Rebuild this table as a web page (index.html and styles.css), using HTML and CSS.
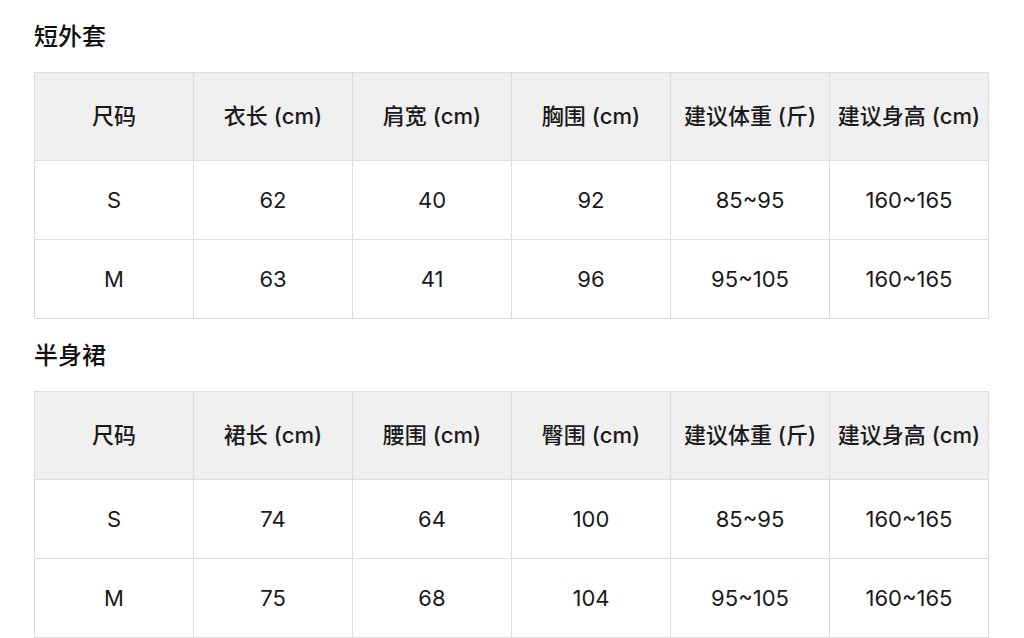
FILE: index.html
```html
<!DOCTYPE html>
<html lang="zh">
<head>
<meta charset="utf-8">
<link rel="stylesheet" href="styles.css">
</head>
<body>
<div class="page">
  <section class="block">
    <h2 class="title">短外套</h2>
    <table class="size">
      <colgroup><col><col><col><col><col><col></colgroup>
      <thead>
        <tr><th>尺码</th><th>衣长 (cm)</th><th>肩宽 (cm)</th><th>胸围 (cm)</th><th>建议体重 (斤)</th><th>建议身高 (cm)</th></tr>
      </thead>
      <tbody>
        <tr><td>S</td><td>62</td><td>40</td><td>92</td><td>85~95</td><td>160~165</td></tr>
        <tr><td>M</td><td>63</td><td>41</td><td>96</td><td>95~105</td><td>160~165</td></tr>
      </tbody>
    </table>
  </section>
  <section class="block">
    <h2 class="title">半身裙</h2>
    <table class="size">
      <colgroup><col><col><col><col><col><col></colgroup>
      <thead>
        <tr><th>尺码</th><th>裙长 (cm)</th><th>腰围 (cm)</th><th>臀围 (cm)</th><th>建议体重 (斤)</th><th>建议身高 (cm)</th></tr>
      </thead>
      <tbody>
        <tr><td>S</td><td>74</td><td>64</td><td>100</td><td>85~95</td><td>160~165</td></tr>
        <tr><td>M</td><td>75</td><td>68</td><td>104</td><td>95~105</td><td>160~165</td></tr>
      </tbody>
    </table>
  </section>
</div>
</body>
</html>
```

FILE: styles.css
```css
html, body {
  margin: 0;
  padding: 0;
  background: #ffffff;
}
body {
  font-family: Inter, "Noto Sans CJK SC", sans-serif;
  color: #1a1a1a;
}
.page {
  padding: 22px 35px 0 34px;
}
.block + .block {
  margin-top: 22px;
}
.title {
  margin: 0 0 20px 0;
  font-size: 24px;
  line-height: 30px;
  font-weight: 500;
  color: #111;
}
.size {
  width: 955px;
  border-collapse: collapse;
  table-layout: fixed;
}
.size th,
.size td {
  border: 1px solid #dcdcdc;
  text-align: center;
  font-size: 22px;
  font-weight: 400;
  color: #1a1a1a;
  padding: 0;
}
.size th {
  background: #f0f0f0;
  height: 82px;
  padding: 0 0 5px 0;
  font-weight: 500;
  white-space: nowrap;
}
.size td {
  height: 78px;
}
```
